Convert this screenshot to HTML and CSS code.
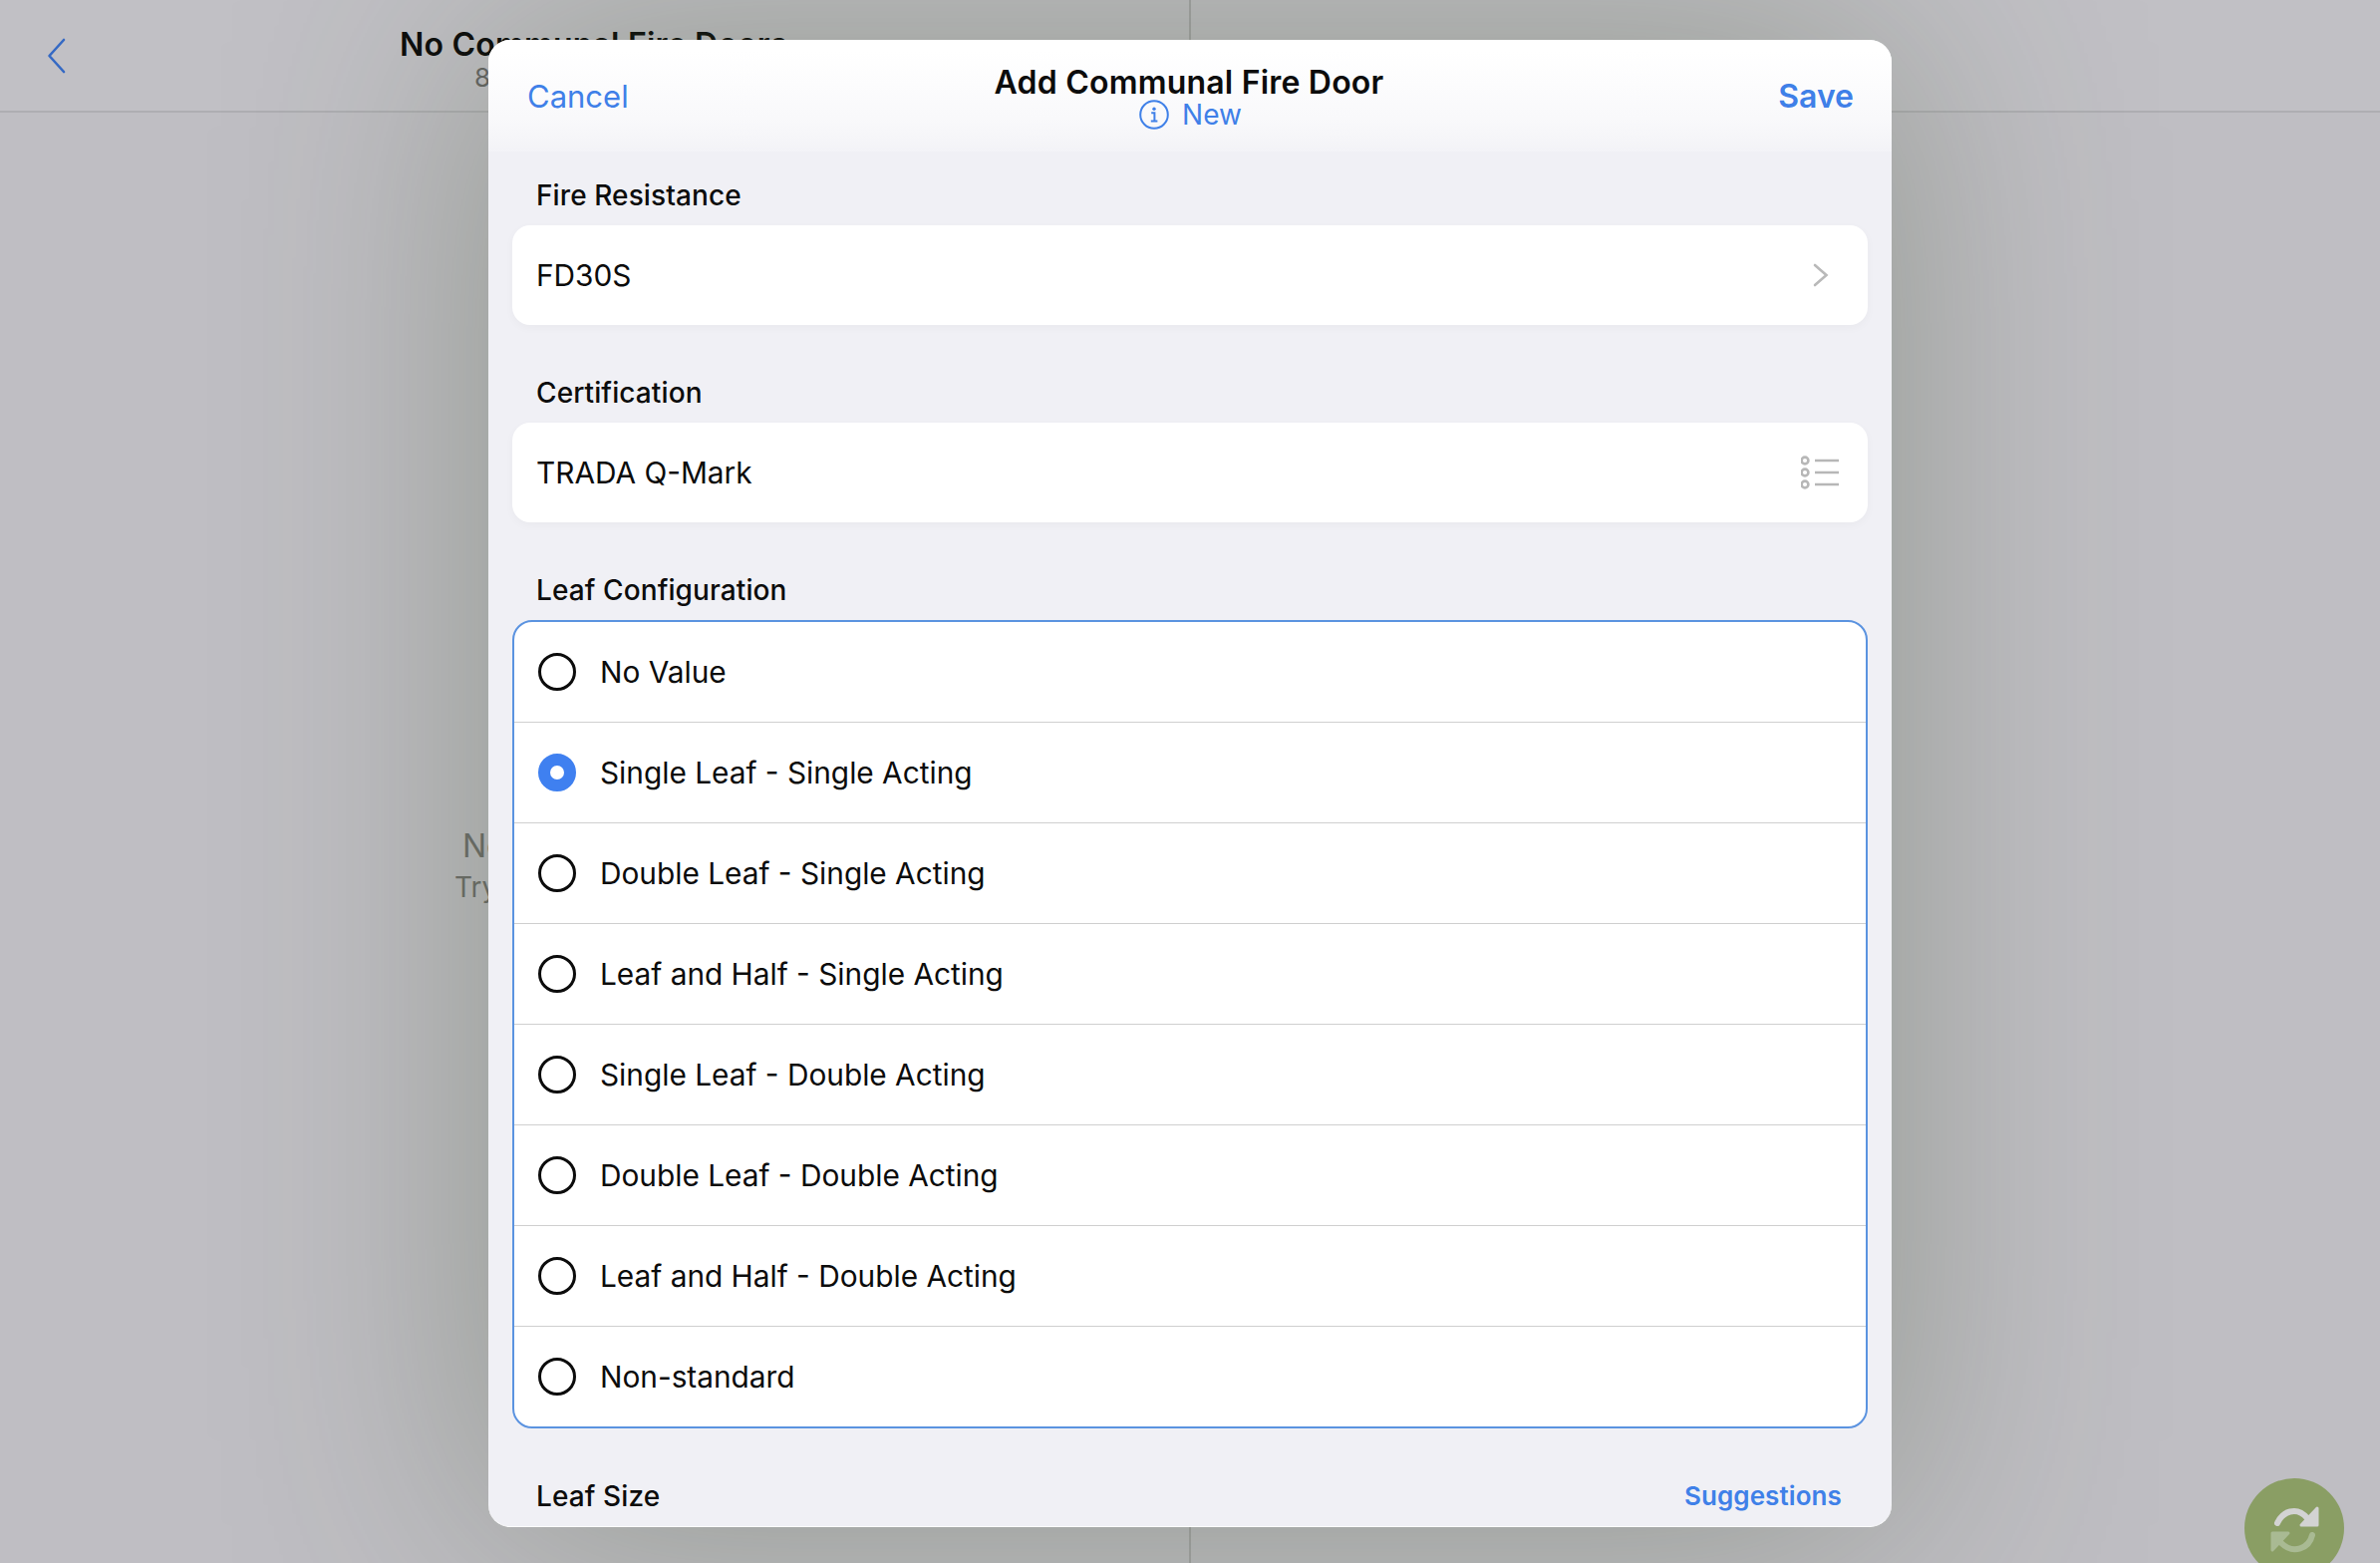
FILE: index.html
```html
<!DOCTYPE html>
<html lang="en">
<head>
    <meta charset="UTF-8">
    <meta name="viewport" content="width=device-width, initial-scale=1.0">
    <title>Add Communal Fire Door</title>
    <link rel="stylesheet" href="styles.css">
</head>
<body>

    <div class="page">
        <header class="nav">
            <div class="nav-left">
                <svg class="back" width="20" height="36" viewBox="0 0 20 36">
                    <path d="M17 2 L2.5 18 L17 34"/>
                </svg>
                <div class="nav-title">
                    <div class="nav-heading">No Communal Fire Doors</div>
                    <div class="nav-count">8</div>
                </div>
            </div>
            <div class="nav-right"></div>
        </header>
        <main class="panes">
            <div class="pane-left">
                <div class="empty-title">No</div>
                <div class="empty-hint">Try</div>
            </div>
            <div class="pane-right"></div>
        </main>
    </div>

    <section class="modal">
        <header class="modal-head">
            <a class="head-cancel">Cancel</a>
            <div class="head-center">
                <div class="head-title">Add Communal Fire Door</div>
                <div class="head-status">
                    <svg width="30" height="30" viewBox="0 0 30 30">
                        <circle cx="15" cy="15" r="13.8" class="info-ring"/>
                        <circle cx="15" cy="9.2" r="1.7" class="info-dot"/>
                        <path d="M12.2 13.2 H15.4 V21.2 M11.8 21.6 H18.4" class="info-stem"/>
                    </svg>
                    <span>New</span>
                </div>
            </div>
            <a class="head-save">Save</a>
        </header>

        <div class="modal-body">
            <div class="group">
                <div class="group-label">Fire Resistance</div>
                <div class="card">
                    <span>FD30S</span>
                    <svg class="chevron" width="16" height="24" viewBox="0 0 16 24">
                        <path d="M2 2 L13.5 12 L2 22"/>
                    </svg>
                </div>
            </div>

            <div class="group">
                <div class="group-label">Certification</div>
                <div class="card">
                    <span>TRADA Q-Mark</span>
                    <svg class="list-icon" width="38" height="36" viewBox="0 0 38 36">
                        <circle cx="4" cy="6" r="3.4"/>
                        <circle cx="4" cy="18" r="3.4"/>
                        <circle cx="4" cy="30" r="3.4"/>
                        <path d="M14 6 H38 M14 18 H38 M14 30 H38"/>
                    </svg>
                </div>
            </div>

            <div class="group">
                <div class="group-label">Leaf Configuration</div>
                <div class="options">
                    <div class="option"><span class="radio"></span>No Value</div>
                    <div class="option"><span class="radio radio-on"></span>Single Leaf - Single Acting</div>
                    <div class="option"><span class="radio"></span>Double Leaf - Single Acting</div>
                    <div class="option"><span class="radio"></span>Leaf and Half - Single Acting</div>
                    <div class="option"><span class="radio"></span>Single Leaf - Double Acting</div>
                    <div class="option"><span class="radio"></span>Double Leaf - Double Acting</div>
                    <div class="option"><span class="radio"></span>Leaf and Half - Double Acting</div>
                    <div class="option"><span class="radio"></span>Non-standard</div>
                </div>
            </div>

            <div class="group-label group-label-row">
                <span>Leaf Size</span>
                <a class="suggestions">Suggestions</a>
            </div>
        </div>
    </section>

    <button class="sync" type="button" aria-label="Sync">
        <svg width="100" height="100" viewBox="0 0 100 100">
            <path class="sync-top-line" d="M33 45 C38 34 52 27 63 40"/>
            <path class="sync-top-head" d="M73 30 V47 H57 Z"/>
            <path class="sync-bottom-line" d="M68 57 C65 70 49 77 37 65"/>
            <path class="sync-bottom-head" d="M28 55 H44 L28 72 Z"/>
        </svg>
    </button>

</body>
</html>
```

FILE: styles.css
```css
* {
    box-sizing: border-box;
}
html, body {
    margin: 0;
    height: 100%;
}
body {
    position: relative;
    width: 2388px;
    height: 1568px;
    overflow: hidden;
    font-family: Inter, "Liberation Sans", sans-serif;
    background-color: #bfbec3;
    color: #0c0c0c;
}
.page {
    display: flex;
    flex-direction: column;
    height: 100%;
}
.nav {
    display: flex;
    height: 113px;
    background-color: #c1c0c5;
    border-bottom: 2px solid #aeaeb2;
}
.nav-left {
    display: flex;
    width: 1195px;
    padding-left: 47px;
    border-right: 2px solid #a6a6a8;
}
.back {
    margin-top: 38px;
    fill: none;
    stroke: #3569c4;
    stroke-width: 2.6;
    stroke-linecap: round;
    stroke-linejoin: round;
}
.nav-title {
    margin-left: 334px;
    padding-top: 26px;
}
.nav-heading {
    font-size: 32px;
    font-weight: 600;
    line-height: 38px;
    letter-spacing: 0.2px;
    white-space: nowrap;
}
.nav-count {
    padding-left: 75px;
    font-size: 26px;
    line-height: 28px;
    color: #666665;
}
.panes {
    display: flex;
    flex: 1;
}
.pane-left {
    width: 1195px;
    padding: 717px 0 0 456px;
    border-right: 2px solid #a6a6a8;
    color: #6f6f6d;
}
.empty-title {
    padding-left: 8px;
    font-size: 32px;
    line-height: 38px;
}
.empty-hint {
    font-size: 28px;
    line-height: 44px;
}

.modal {
    position: absolute;
    left: 490px;
    top: 40px;
    width: 1408px;
    height: 1492px;
    border-radius: 22px;
    border-bottom: 1px solid #fff;
    background-color: #f0f0f5;
    box-shadow: 0 0 320px rgba(60, 75, 40, 0.34);
}
.modal-head {
    display: grid;
    grid-template-columns: 1fr auto 1fr;
    align-items: center;
    height: 112px;
    padding: 0 38px 0 39px;
    border-radius: 22px 22px 0 0;
    background: linear-gradient(#ffffff 10%, #f9f9fb 70%, #f3f3f7);
}
.head-cancel {
    font-size: 31px;
    color: #3f80e8;
}
.head-center {
    text-align: center;
}
.head-title {
    padding: 1px 3px 0 0;
    font-size: 32px;
    font-weight: 600;
    line-height: 37px;
    letter-spacing: 0.2px;
}
.head-status {
    display: flex;
    align-items: center;
    justify-content: center;
    gap: 13px;
    height: 28px;
    font-size: 28px;
    color: #3f80e8;
}
.info-ring, .info-stem {
    fill: none;
    stroke: #3f80e8;
    stroke-width: 2;
}
.info-dot {
    fill: #3f80e8;
}
.head-save {
    justify-self: end;
    font-size: 32px;
    font-weight: 600;
    color: #3f80e8;
}

.modal-body {
    padding: 26px 24px 0;
}
.group {
    margin-bottom: 50px;
}
.group-label {
    height: 34px;
    margin-bottom: 14px;
    padding: 0 24px;
    font-size: 28px;
    font-weight: 500;
    line-height: 36px;
    letter-spacing: 0.1px;
}
.group-label-row {
    display: flex;
    justify-content: space-between;
    padding-right: 26px;
}
.suggestions {
    font-size: 26px;
    font-weight: 600;
    color: #3f80e8;
}
.card {
    display: flex;
    align-items: center;
    justify-content: space-between;
    height: 100px;
    padding: 0 29px 0 24px;
    background-color: #fff;
    border-radius: 18px;
    box-shadow: 0 3px 10px rgba(0, 0, 0, 0.03);
    font-size: 29.8px;
}
.chevron {
    margin-right: 10px;
    fill: none;
    stroke: #b9b9b9;
    stroke-width: 2.6;
    stroke-linecap: round;
}
.list-icon {
    fill: none;
    stroke: #b7b7b7;
    stroke-width: 2.6;
}
.options {
    height: 811px;
    background-color: #fff;
    border: 2px solid #5b93e0;
    border-radius: 20px;
}
.option {
    display: flex;
    align-items: center;
    gap: 24px;
    height: 101px;
    padding-left: 24px;
    border-bottom: 1px solid #cfcfcf;
    font-size: 29.8px;
}
.option:last-child {
    height: 100px;
    border-bottom: none;
}
.radio {
    width: 38px;
    height: 38px;
    border: 3px solid #0c0c0c;
    border-radius: 50%;
    flex-shrink: 0;
}
.radio-on {
    border: 12px solid #3f80f0;
    background-color: #fff;
}

.sync {
    position: absolute;
    left: 2252px;
    top: 1483px;
    width: 100px;
    height: 100px;
    padding: 0;
    border: none;
    border-radius: 50%;
    background-color: #8a9e64;
}
.sync svg {
    display: block;
}
.sync-top-line, .sync-bottom-line {
    fill: none;
    stroke-width: 6;
    stroke-linecap: round;
}
.sync-top-line {
    stroke: #d3d3d3;
}
.sync-bottom-line {
    stroke: #a9ba93;
}
.sync-top-head, .sync-bottom-head {
    stroke-width: 3;
    stroke-linejoin: round;
}
.sync-top-head {
    fill: #d3d3d3;
    stroke: #d3d3d3;
}
.sync-bottom-head {
    fill: #a9ba93;
    stroke: #a9ba93;
}
```
